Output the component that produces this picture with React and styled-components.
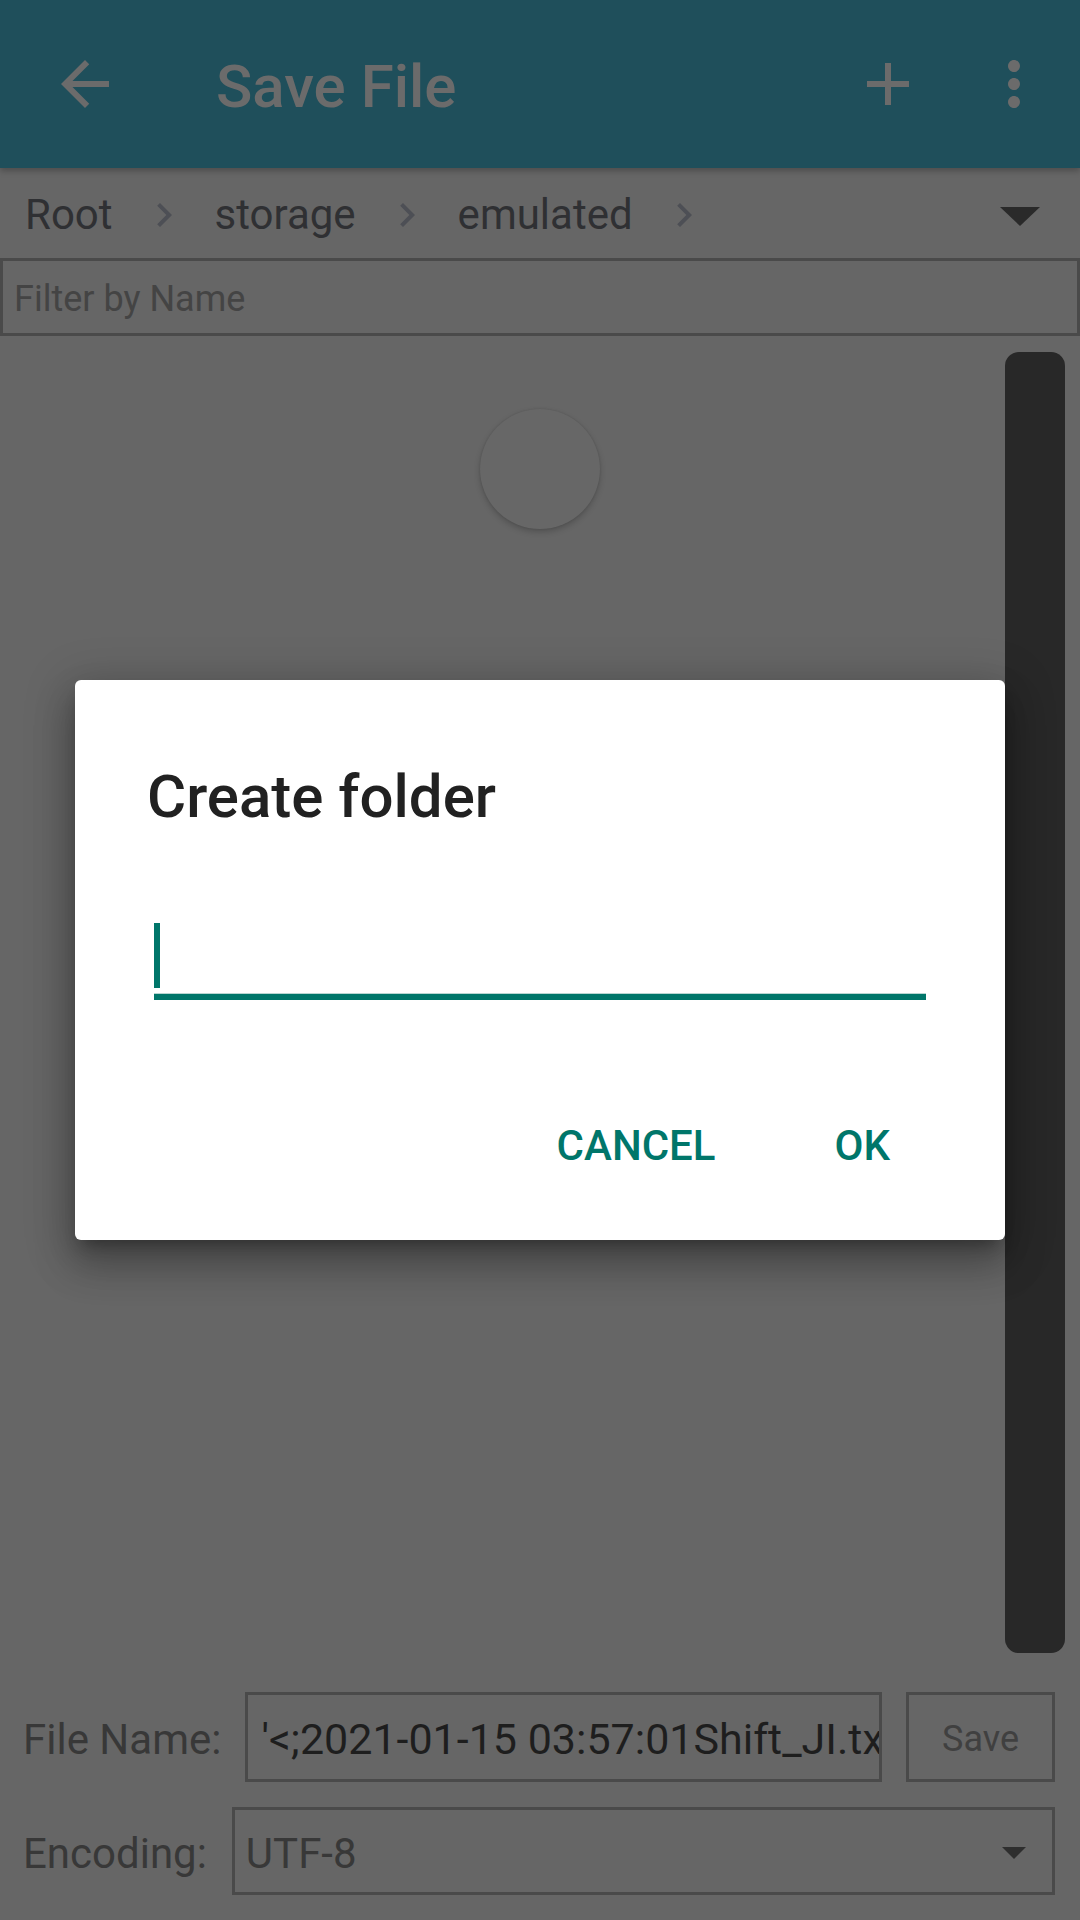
import React from "react";
import styled, { createGlobalStyle } from "styled-components";

const Global = createGlobalStyle`
  html, body { margin: 0; padding: 0; }
  body { font-family: Roboto, "Noto Sans", "Liberation Sans", sans-serif; background: #666666; }
  * { box-sizing: border-box; }
`;

const Page = styled.div`
  width: 1080px;
  height: 1920px;
  display: flex;
  flex-direction: column;
  background: #666666;
  position: relative;
  overflow: hidden;
`;

const AppBar = styled.header`
  height: 168px;
  flex: none;
  background: #1f4f5b;
  display: flex;
  align-items: center;
  padding: 0 30px 0 49px;
  box-shadow: 0 3px 6px rgba(0, 0, 0, 0.25);
  position: relative;
  z-index: 1;
`;

const IconSvg = styled.svg`
  width: ${(p) => p.$size || 72}px;
  height: ${(p) => p.$size || 72}px;
  flex: none;
  fill: ${(p) => p.$color || "#6b6b6b"};
  display: block;
`;

const Title = styled.h1`
  margin: 5px 0 0 95px;
  font-size: 60px;
  font-weight: 500;
  color: #6b6b6b;
  line-height: 1;
  flex: 1;
`;

const Actions = styled.div`
  display: flex;
  align-items: center;
  gap: 54px;
`;

const Crumbs = styled.nav`
  height: 90px;
  flex: none;
  display: flex;
  align-items: center;
  padding: 4px 40px 0 25px;
`;

const Crumb = styled.span`
  font-size: 42px;
  color: #2f3033;
  line-height: 1;
`;

const CrumbList = styled.div`
  flex: 1;
  display: flex;
  align-items: center;
  gap: 27px;
`;

const DropTriangle = styled.span`
  width: 0;
  height: 0;
  border-left: 20px solid transparent;
  border-right: 20px solid transparent;
  border-top: 19px solid #2a2a2a;
  margin-top: 2px;
`;

const FilterBox = styled.div`
  height: 78px;
  flex: none;
  border: 3px solid #4a4a4a;
  display: flex;
  align-items: center;
  padding: 4px 0 0 11px;
  font-size: 36px;
  color: #444444;
`;

const Main = styled.main`
  flex: 1;
  display: flex;
  padding: 16px 15px 39px 0;
`;

const ListArea = styled.div`
  flex: 1;
  display: flex;
  justify-content: center;
  align-items: flex-start;
  padding-top: 57px;
  padding-left: 75px;
`;

const Spinner = styled.div`
  width: 120px;
  height: 120px;
  border-radius: 50%;
  background: #676767;
  box-shadow: 0 3px 6px rgba(0, 0, 0, 0.2), 0 0 2px rgba(0, 0, 0, 0.12);
`;

const ScrollThumb = styled.div`
  width: 60px;
  height: 1301px;
  border-radius: 14px;
  background: #282828;
`;

const Bottom = styled.section`
  height: 228px;
  flex: none;
  display: flex;
  flex-direction: column;
  gap: 25px;
  padding: 0 25px 25px 25px;
`;

const Row = styled.div`
  height: ${(p) => p.$h}px;
  display: flex;
  align-items: stretch;
  gap: ${(p) => p.$gap || 25}px;
`;

const Label = styled.label`
  display: flex;
  align-items: center;
  font-size: 42px;
  color: #383838;
  flex: none;
  padding-top: 4px;
  margin-left: -2px;
`;

const TextBox = styled.div`
  flex: 1;
  border: 3px solid #4a4a4a;
  display: flex;
  align-items: center;
  padding: 4px 10px 0 13px;
  font-size: 43px;
  color: #1e1e1e;
  white-space: nowrap;
  overflow: hidden;
`;

const SaveButton = styled.button`
  width: 149px;
  flex: none;
  border: 3px solid #4a4a4a;
  background: transparent;
  font-family: inherit;
  font-size: 36px;
  color: #404040;
  padding: 3px 0 0 0;
`;

const SelectBox = styled.div`
  flex: 1;
  border: 3px solid #4a4a4a;
  display: flex;
  align-items: center;
  justify-content: space-between;
  padding: 4px 26px 0 11px;
  font-size: 42px;
  color: #383838;
`;

const SmallTriangle = styled.span`
  width: 0;
  height: 0;
  border-left: 12px solid transparent;
  border-right: 12px solid transparent;
  border-top: 12px solid #2e2e2e;
`;

const Overlay = styled.div`
  position: absolute;
  inset: 0;
  display: flex;
  align-items: center;
  justify-content: center;
  z-index: 5;
`;

const Dialog = styled.div`
  width: 930px;
  height: 560px;
  background: #ffffff;
  border-radius: 6px;
  box-shadow: 0 24px 38px 3px rgba(0, 0, 0, 0.22), 0 9px 46px 8px rgba(0, 0, 0, 0.18),
    0 11px 15px -7px rgba(0, 0, 0, 0.3);
  display: flex;
  flex-direction: column;
  padding-top: 87px;
`;

const DialogTitle = styled.h2`
  margin: 0 0 0 72px;
  font-size: 60px;
  font-weight: 500;
  line-height: 1;
  color: #212121;
`;

const EditField = styled.div`
  margin: 96px 79px 0 79px;
  height: 77px;
  border-bottom: 6px solid #00766a;
  box-shadow: 0 -1px 0 0 #b9d6d2 inset;
  display: flex;
  align-items: flex-start;
`;

const Cursor = styled.span`
  width: 6px;
  height: 65px;
  background: #00766a;
`;

const DialogActions = styled.div`
  margin-top: 125px;
  display: flex;
  justify-content: flex-end;
  gap: 119px;
  padding-right: 115px;
`;

const TextButton = styled.button`
  border: none;
  background: transparent;
  padding: 0;
  font-family: inherit;
  font-size: 42px;
  font-weight: 500;
  line-height: 1;
  letter-spacing: 0;
  color: #00766a;
  text-transform: uppercase;
`;

const Chevron = () => (
  <IconSvg viewBox="0 0 24 24" $size={48} $color="#4d4f55">
    <path d="M10 6L8.59 7.41 13.17 12l-4.58 4.59L10 18l6-6z" />
  </IconSvg>
);

export default function App() {
  return (
    <>
      <Global />
      <Page>
        <AppBar>
          <IconSvg viewBox="0 0 24 24">
            <path d="M20 11H7.83l5.59-5.59L12 4l-8 8 8 8 1.41-1.41L7.83 13H20v-2z" />
          </IconSvg>
          <Title>Save File</Title>
          <Actions>
            <IconSvg viewBox="0 0 24 24">
              <path d="M19 13h-6v6h-2v-6H5v-2h6V5h2v6h6v2z" />
            </IconSvg>
            <IconSvg viewBox="0 0 24 24">
              <path d="M12 8c1.1 0 2-.9 2-2s-.9-2-2-2-2 .9-2 2 .9 2 2 2zm0 2c-1.1 0-2 .9-2 2s.9 2 2 2 2-.9 2-2-.9-2-2-2zm0 6c-1.1 0-2 .9-2 2s.9 2 2 2 2-.9 2-2-.9-2-2-2z" />
            </IconSvg>
          </Actions>
        </AppBar>

        <Crumbs>
          <CrumbList>
            <Crumb>Root</Crumb>
            <Chevron />
            <Crumb>storage</Crumb>
            <Chevron />
            <Crumb>emulated</Crumb>
            <Chevron />
          </CrumbList>
          <DropTriangle />
        </Crumbs>

        <FilterBox>Filter by Name</FilterBox>

        <Main>
          <ListArea>
            <Spinner />
          </ListArea>
          <ScrollThumb />
        </Main>

        <Bottom>
          <Row $h={90} $gap={24}>
            <Label>File Name:</Label>
            <TextBox>'&lt;;2021-01-15 03:57:01Shift_JI.txt</TextBox>
            <SaveButton>Save</SaveButton>
          </Row>
          <Row $h={88} $gap={25}>
            <Label>Encoding:</Label>
            <SelectBox>
              <span>UTF-8</span>
              <SmallTriangle />
            </SelectBox>
          </Row>
        </Bottom>

        <Overlay>
          <Dialog>
            <DialogTitle>Create folder</DialogTitle>
            <EditField>
              <Cursor />
            </EditField>
            <DialogActions>
              <TextButton>Cancel</TextButton>
              <TextButton>OK</TextButton>
            </DialogActions>
          </Dialog>
        </Overlay>
      </Page>
    </>
  );
}
